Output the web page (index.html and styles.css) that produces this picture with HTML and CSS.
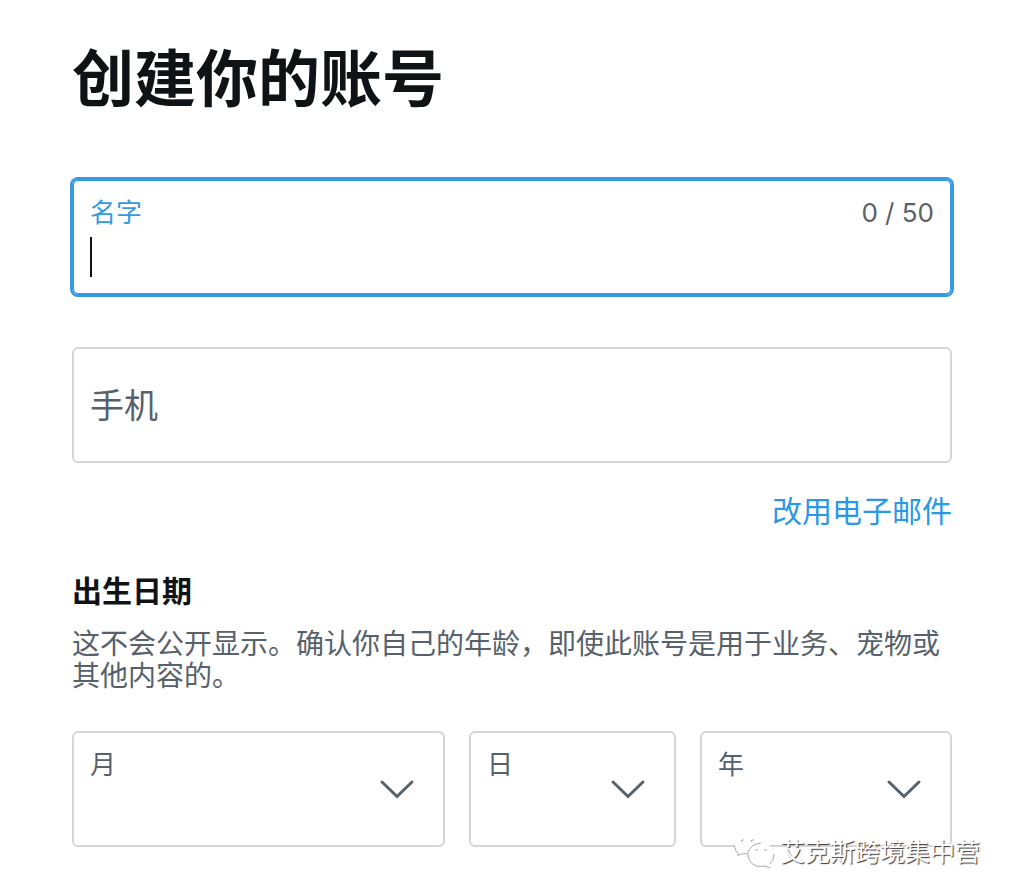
FILE: index.html
```html
<!DOCTYPE html>
<html lang="zh-CN">

<head>
    <meta charset="UTF-8">
    <meta name="viewport" content="width=device-width, initial-scale=1.0">
    <title>创建你的账号</title>
    <link rel="stylesheet" href="styles.css">
</head>

<body>
    <form class="signup">
        <h1 class="title">创建你的账号</h1>

        <div class="field active">
            <div class="field-top">
                <label for="name">名字</label>
                <span class="count">0 / 50</span>
            </div>
            <input class="field-input" type="text" id="name" maxlength="50">
        </div>

        <div class="field">
            <input class="field-phone" type="tel" id="phone" placeholder="手机" aria-label="手机">
        </div>

        <a class="switch-link" href="#">改用电子邮件</a>

        <h2 class="subtitle">出生日期</h2>
        <p class="desc">这不会公开显示。确认你自己的年龄，即使此账号是用于业务、宠物或其他内容的。</p>

        <!-- 月 / 日 / 年 -->
        <div class="birthday">
            <div class="select-box">
                <label for="month">月</label>
                <select id="month">
                    <option></option>
                </select>
                <svg class="arrow" viewBox="0 0 34 20"><path d="M3 3 18 17.5 33 3" /></svg>
            </div>
            <div class="select-box">
                <label for="day">日</label>
                <select id="day">
                    <option></option>
                </select>
                <svg class="arrow" viewBox="0 0 34 20"><path d="M3 3 18 17.5 33 3" /></svg>
            </div>
            <div class="select-box">
                <label for="year">年</label>
                <select id="year">
                    <option></option>
                </select>
                <svg class="arrow" viewBox="0 0 34 20"><path d="M3 3 18 17.5 33 3" /></svg>
            </div>
        </div>

        <!-- 右下角水印 -->
        <div class="watermark">
            <svg class="wechat" viewBox="0 0 42 34">
                <path class="bubble" d="M15 0C7 0 1 5 1 11c0 4 2 7 5 9l-2 3 6-3c2 1 4 1 7 1 7 0 12-4 12-10S23 0 15 0z" />
                <path class="bubble" d="M28 8c-7 0-13 5-13 12s6 11 13 11c2 0 4 0 5-1l5 3-1-5c3-2 4-5 4-8 0-7-6-12-13-12z" />
                <path class="edge" d="M1 10q1 6 5 10M4 20.500q4-2 10-2M28 8q-10 1-13 9-1 10 8 14 6 1 9 0l5 2M41 19q0 6-4 10" />
                <path class="eye" d="M8 7q0-3 3-2M18 7q0-3 3-2M22 15h3M31 15h3" />
            </svg>
            <span>艾克斯跨境集中营</span>
        </div>
    </form>
</body>

</html>
```

FILE: styles.css
```css
* {
    box-sizing: border-box;
}

body {
    margin: 0;
    background-color: #fff;
    color: #101315;
    font-family: Inter, "Noto Sans CJK SC", sans-serif;
}

input,
select {
    border: none;
    outline: none;
    background: none;
    color: #101315;
    font-family: inherit;
    font-size: 34px;
}

.signup {
    position: relative;
    padding: 44px 60px 48px 72px;
}

.title {
    margin: 0 0 63px;
    font-size: 62px;
    line-height: 72px;
}

.field {
    height: 116px;
    margin-bottom: 52px;
    border: 2px solid #d3d5d6;
    border-radius: 6px;
}

.field.active {
    padding: 16px 16px 0;
    border-color: #349ae2;
    box-shadow: 0 0 0 2px #349ae2;
}

.field-top {
    display: flex;
    justify-content: space-between;
    font-size: 26px;
    line-height: 32px;
}

.field.active label {
    color: #349ae2;
}

.field .count {
    color: #5b6166;
}

/* 光标 */
.field-input {
    display: block;
    width: 100%;
    height: 40px;
    margin-top: 8px;
    padding: 0;
    background: linear-gradient(#101315, #101315) no-repeat 0 0 / 2px 100%;
}

.field-phone {
    width: 100%;
    height: 100%;
    padding: 0 16px;
}

.field-phone::placeholder {
    color: #56616b;
}

.switch-link {
    display: block;
    width: fit-content;
    margin: -26px 0 0 auto;
    color: #2a98e6;
    font-size: 30px;
    line-height: 44px;
    text-decoration: none;
}

.subtitle {
    margin: 36px 0 15px;
    font-size: 30px;
    line-height: 44px;
}

.desc {
    margin: 0 0 39px;
    color: #56616b;
    font-size: 28px;
    line-height: 32px;
}

.birthday {
    display: grid;
    grid-template-columns: 373fr 207fr 252fr;
    gap: 24px;
}

/* 标签、下拉框、箭头叠在同一个格子里 */
.select-box {
    display: grid;
    height: 116px;
    border: 2px solid #d3d5d6;
    border-radius: 6px;
}

.select-box > * {
    grid-area: 1 / 1;
}

.select-box label {
    padding: 16px 16px 0;
    color: #56616b;
    font-size: 26px;
    line-height: 32px;
}

.select-box select {
    width: 100%;
    padding: 40px 16px 0;
    appearance: none;
}

.arrow {
    width: 34px;
    height: 20px;
    margin-right: 30px;
    overflow: visible;
    place-self: center end;
    fill: none;
    stroke: #56616b;
    stroke-width: 3;
    stroke-linecap: round;
    pointer-events: none;
}

.watermark {
    position: absolute;
    right: 32px;
    bottom: 25px;
    display: flex;
    align-items: center;
    gap: 5px;
    color: #fff;
    font-size: 25px;
    line-height: 36px;
    text-shadow: 1px 1px 1px #333;
}

.wechat {
    width: 42px;
    height: 34px;
}

.wechat .bubble {
    fill: #fff;
}

.wechat .edge,
.wechat .eye {
    fill: none;
    stroke: #aaa;
}
```
